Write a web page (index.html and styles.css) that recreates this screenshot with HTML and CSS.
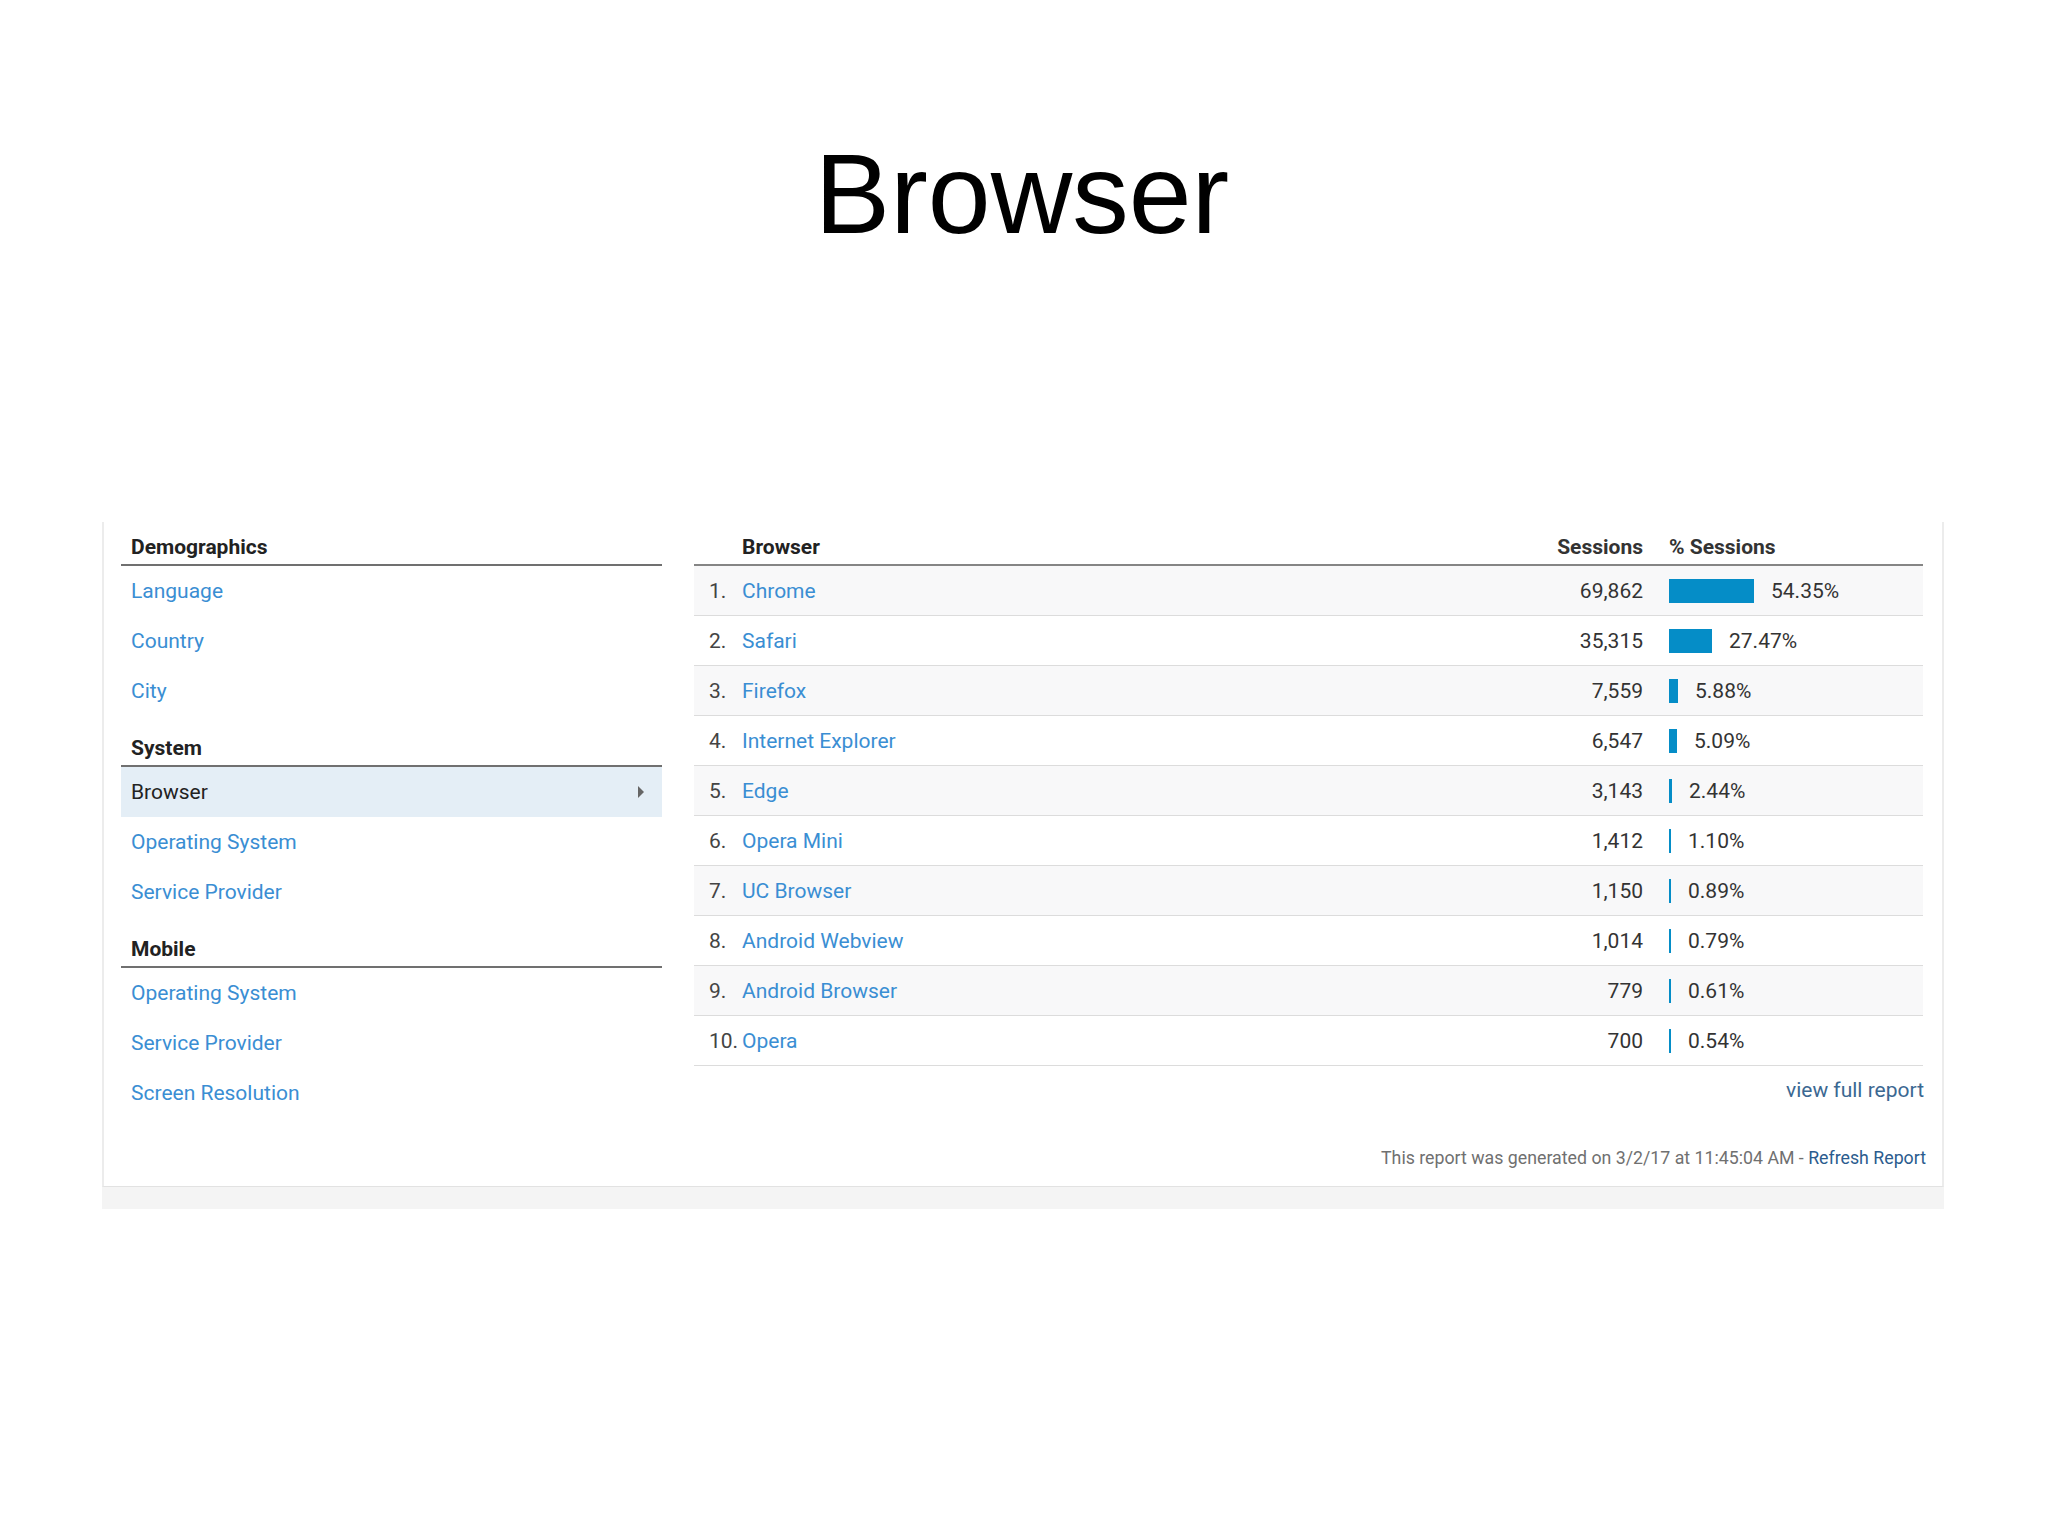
FILE: index.html
```html
<!DOCTYPE html>
<html lang="en">
<head>
<meta charset="utf-8">
<title>Browser</title>
<link rel="stylesheet" href="styles.css">
</head>
<body>
<h1 class="title">Browser</h1>

<div class="shell">
  <div class="card">
    <div class="content">
      <nav class="menu">
        <div class="group-header">Demographics</div>
        <a class="menu-item">Language</a>
        <a class="menu-item">Country</a>
        <a class="menu-item">City</a>
        <div class="group-header">System</div>
        <div class="menu-item selected">Browser<span class="caret"></span></div>
        <a class="menu-item">Operating System</a>
        <a class="menu-item">Service Provider</a>
        <div class="group-header">Mobile</div>
        <a class="menu-item">Operating System</a>
        <a class="menu-item">Service Provider</a>
        <a class="menu-item">Screen Resolution</a>
      </nav>

      <section class="report">
        <div class="table">
          <div class="row head">
            <span></span>
            <span class="name">Browser</span>
            <span class="sessions">Sessions</span>
            <span class="pct">% Sessions</span>
          </div>
          <div class="row odd"><span class="num">1.</span><a class="name">Chrome</a><span class="sessions">69,862</span><span class="pct"><i class="bar" style="width:85px"></i>54.35%</span></div>
          <div class="row"><span class="num">2.</span><a class="name">Safari</a><span class="sessions">35,315</span><span class="pct"><i class="bar" style="width:43px"></i>27.47%</span></div>
          <div class="row odd"><span class="num">3.</span><a class="name">Firefox</a><span class="sessions">7,559</span><span class="pct"><i class="bar" style="width:9px"></i>5.88%</span></div>
          <div class="row"><span class="num">4.</span><a class="name">Internet Explorer</a><span class="sessions">6,547</span><span class="pct"><i class="bar" style="width:8px"></i>5.09%</span></div>
          <div class="row odd"><span class="num">5.</span><a class="name">Edge</a><span class="sessions">3,143</span><span class="pct"><i class="bar" style="width:3px"></i>2.44%</span></div>
          <div class="row"><span class="num">6.</span><a class="name">Opera Mini</a><span class="sessions">1,412</span><span class="pct"><i class="bar" style="width:2px"></i>1.10%</span></div>
          <div class="row odd"><span class="num">7.</span><a class="name">UC Browser</a><span class="sessions">1,150</span><span class="pct"><i class="bar" style="width:2px"></i>0.89%</span></div>
          <div class="row"><span class="num">8.</span><a class="name">Android Webview</a><span class="sessions">1,014</span><span class="pct"><i class="bar" style="width:2px"></i>0.79%</span></div>
          <div class="row odd"><span class="num">9.</span><a class="name">Android Browser</a><span class="sessions">779</span><span class="pct"><i class="bar" style="width:2px"></i>0.61%</span></div>
          <div class="row"><span class="num">10.</span><a class="name">Opera</a><span class="sessions">700</span><span class="pct"><i class="bar" style="width:2px"></i>0.54%</span></div>
        </div>
        <div class="more"><a class="more-link">view full report</a></div>
      </section>
    </div>
    <div class="footer">This report was generated on 3/2/17 at 11:45:04 AM - <a class="refresh">Refresh Report</a></div>
  </div>
</div>
</body>
</html>
```

FILE: styles.css
```css
html, body {
  margin: 0;
  padding: 0;
  background: #ffffff;
}

body {
  font-family: Roboto, "Noto Sans", "Liberation Sans", sans-serif;
  color: #333333;
}

.title {
  margin: 0;
  padding-top: 138px;
  padding-right: 4px;
  height: 112px;
  font-family: "Liberation Sans", Arial, sans-serif;
  font-weight: 400;
  font-size: 113px;
  line-height: 112px;
  text-align: center;
  color: #000000;
}

.shell {
  margin: 272px 104px 0 102px;
  background: #f4f4f4;
  padding-bottom: 22px;
}

.card {
  background: #ffffff;
  border-left: 2px solid #ececec;
  border-right: 2px solid #ececec;
  border-bottom: 1px solid #e2e2e2;
  padding: 0 19px 18px 17px;
}

.content {
  display: flex;
  gap: 32px;
  align-items: flex-start;
}

.menu {
  width: 541px;
  flex: none;
  display: flex;
  flex-direction: column;
}

.group-header {
  padding: 20px 0 5px 10px;
  line-height: 24px;
  font-size: 21px;
  font-weight: 700;
  color: #222222;
  border-bottom: 2px solid #707070;
}

.group-header:first-child {
  padding-top: 13px;
}

.menu-item {
  position: relative;
  display: block;
  height: 50px;
  line-height: 50px;
  padding-left: 10px;
  font-size: 21px;
  color: #3a8ed3;
}

.menu-item.selected {
  background: #e4eef6;
  color: #222222;
}

.caret {
  position: absolute;
  left: 517px;
  top: 19px;
  width: 0;
  height: 0;
  border-top: 6px solid transparent;
  border-bottom: 6px solid transparent;
  border-left: 6px solid #666666;
}

.report {
  flex: 1;
  min-width: 0;
}

.table {
  display: flex;
  flex-direction: column;
}

.row {
  display: grid;
  grid-template-columns: 48px 1fr auto 280px;
  align-items: center;
  height: 49px;
  border-bottom: 1px solid #dcdcdc;
  font-size: 21px;
}

.row.odd {
  background: #f8f8f9;
}

.row.head {
  height: auto;
  padding: 13px 0 5px 0;
  line-height: 24px;
  border-bottom: 2px solid #858585;
  font-weight: 700;
  color: #222222;
}

.num {
  padding-left: 15px;
  color: #444444;
}

.name {
  color: #3a8ed3;
}

.row.head .name {
  color: #222222;
}

.sessions {
  text-align: right;
  color: #333333;
}

.pct {
  display: flex;
  align-items: center;
  padding-left: 26px;
  color: #333333;
}

.bar {
  display: block;
  height: 24px;
  margin-right: 17px;
  background: #058dc7;
}

.more {
  margin-top: 12px;
  margin-right: -1px;
  line-height: 24px;
  text-align: right;
  font-size: 21px;
}

.more-link {
  color: #3b6892;
}

.footer {
  margin-top: 30px;
  margin-right: -3px;
  line-height: 20px;
  text-align: right;
  font-size: 17.75px;
  color: #707070;
}

.refresh {
  color: #2b5c8e;
}
```
